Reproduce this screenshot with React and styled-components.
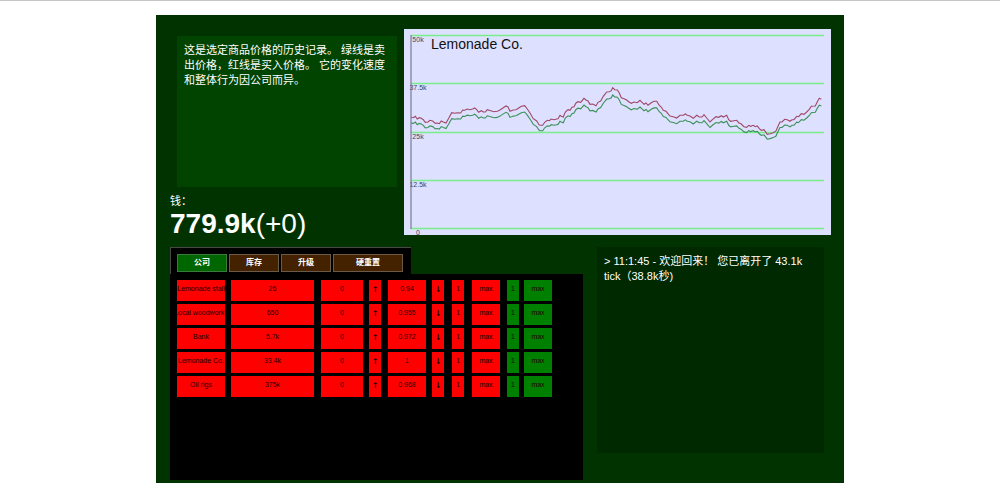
import React, { useState } from "react";
import styled, { createGlobalStyle } from "styled-components";

const GlobalStyle = createGlobalStyle`
  *, *::before, *::after { box-sizing: border-box; }
  body {
    margin: 0;
    background: #fff;
    color: #fff;
    font-family: "Liberation Sans", "Noto Sans CJK SC", sans-serif;
    font-size: 11px;
    line-height: 15px;
  }
`;

const Page = styled.div`
  border-top: 1px solid #c6c6c8;
  padding-top: 14px;
`;

const Board = styled.main`
  width: 688px;
  max-width: 100%;
  margin: 0 auto;
  padding: 14px 13px 3px 14px;
  background: #003300;
  display: flex;
  flex-direction: column;
  gap: 8px;
`;

const TopRow = styled.section`
  display: grid;
  grid-template-columns: 227px minmax(0, 1fr);
  gap: 7px;
  align-items: start;
`;

const Side = styled.div`
  display: flex;
  flex-direction: column;
  padding-top: 7px;
`;

const Info = styled.p`
  margin: 0 0 7px 7px;
  min-height: 151px;
  padding: 7px;
  background: #004400;
`;

const Money = styled.strong`
  font-size: 28px;
  line-height: 30px;
`;

const Change = styled.span`
  font-weight: 400;
`;

const Chart = styled.svg`
  display: block;
  width: 100%;
  height: auto;
  background: #dde0ff;
  font-family: "Liberation Sans", sans-serif;
`;

const BottomRow = styled.section`
  display: grid;
  grid-template-columns: 413px minmax(0, 1fr);
  gap: 14px;
  align-items: start;
`;

const TabBar = styled.nav`
  display: flex;
  gap: 2px;
  width: 241px;
  height: 27px;
  padding: 6px;
  background: #000;
  border: solid #484848;
  border-width: 1px 0 0 1px;
`;

const Tab = styled.button`
  width: ${(p) => (p.$wide ? 70 : 50)}px;
  height: 18px;
  padding: 0;
  border: 1px solid ${(p) => (p.$active ? "#3c7a3c" : "#6b5a48")};
  background: ${(p) => (p.$active ? "#006600" : "#442200")};
  color: #fff;
  font: bold 8px/16px "Liberation Sans", "Noto Sans CJK SC", sans-serif;
  text-align: center;
`;

const Panel = styled.div`
  min-height: 206px;
  padding: 6px 7px;
  background: #000;
`;

const Market = styled.table`
  table-layout: fixed;
  width: 375px;
  border-collapse: collapse;

  td {
    height: 24px;
    padding: 0;
    vertical-align: top;
  }
`;

const Box = styled.div`
  display: flex;
  justify-content: center;
  align-items: flex-start;
  width: ${(p) => p.$w}px;
  height: 21px;
  padding: 0;
  border: 0;
  overflow: hidden;
  white-space: nowrap;
  background: ${(p) => (p.$sell ? "#008000" : "#ff0000")};
  color: #200000;
  font: 7px/18px "Liberation Sans", "DejaVu Sans", sans-serif;
`;

const Arrow = styled(Box)`
  font-family: "DejaVu Sans", sans-serif;
  font-size: 8px;
  font-weight: bold;
  line-height: 20px;
`;

const Action = styled(Box).attrs({ as: "button", type: "button" })``;

const Log = styled.div`
  min-height: 206px;
  margin-right: 7px;
  padding: 7px;
  background: #002900;
`;

/* Price history: x and height in thirds of a chart unit. */
const history = [
  { x: -12, top: 624, points: [[34,292],[40,293],[46,289],[52,297],[58,293],[64,295],[70,299],[76,307],[84,306],[90,301],[98,303],[106,310],[112,309],[118,311],[124,303],[130,306],[138,309],[146,295],[155,278],[164,280],[172,278],[182,279],[188,270],[194,271],[202,267],[210,269],[218,267],[224,264],[230,269],[236,277],[244,272],[250,276],[256,276],[262,269],[272,272],[282,275],[292,274],[300,270],[310,263],[318,258],[324,261],[330,274],[340,270],[348,269],[356,264],[364,259],[374,257],[382,267],[390,279],[400,296],[410,303],[417,314]] },
  { x: 408, top: 504, points: [[0,196],[8,196],[14,187],[22,181],[28,182],[34,177],[42,179],[50,177],[54,176],[60,166],[64,169],[70,171],[76,156],[84,149],[90,151],[96,142],[102,140],[108,129],[114,125],[122,127],[132,115],[138,120],[144,123],[150,133],[158,132],[168,137],[174,127],[182,123],[190,109],[200,96],[208,95],[214,92],[218,83],[224,89],[232,90],[238,99],[244,113],[252,116],[260,120],[266,125],[274,130],[282,126],[292,128],[300,121],[306,127],[312,133],[318,129],[324,136],[334,128],[342,124],[350,124],[358,136],[364,141],[370,151],[378,154],[390,168],[400,170],[410,174],[420,166],[430,166],[436,162],[442,166]] },
  { x: 858, top: 504, points: [[0,168],[10,175],[20,166],[28,171],[36,171],[42,164],[50,174],[60,186],[68,178],[78,170],[86,172],[94,167],[100,171],[110,166],[116,179],[122,184],[132,182],[140,181],[146,188],[154,192],[162,200],[170,202],[176,196],[182,199],[190,196],[196,200],[202,198],[208,206],[214,211],[222,209],[232,223],[240,221],[250,218],[258,213],[264,199],[270,186],[276,186],[284,178],[292,179],[300,184],[306,179],[312,179],[320,169],[326,170],[334,161],[342,163],[350,156],[358,148],[364,139],[376,138],[382,125],[388,115],[394,118]] },
];

const BASE = 199;
const prices = history.flatMap((h) =>
  h.points.map(([x, y]) => [(x + h.x) / 3, (h.top - y) / 3])
);
const line = (factor) =>
  prices.map(([x, v]) => `${x.toFixed(1)},${(BASE - v * factor).toFixed(1)}`).join(" ");

const levels = [
  ["50k", 6],
  ["37.5k", 54],
  ["25k", 103],
  ["12.5k", 151],
  ["0", 199],
];

function PriceChart() {
  return (
    <Chart viewBox="0 0 427 206" role="img" aria-label="Lemonade Co.">
      {levels.map(([label, y]) => (
        <g key={label}>
          <text x="14" y={y + 7} fontSize="7" fill="#44445a" textAnchor="middle">{label}</text>
          <path d={`M7 ${y + 0.5}H420`} stroke="#78ee88" strokeWidth="1.5" />
        </g>
      ))}
      <path d="M7 6V200" stroke="#666680" />
      <polyline points={line(1)} fill="none" stroke="#a04868" strokeWidth="1.1" />
      <polyline points={line(0.948)} fill="none" stroke="#3c9058" strokeWidth="1.1" />
      <text x="27" y="20" fontSize="14" fill="#111">Lemonade Co.</text>
    </Chart>
  );
}

const columns = [54, 90, 48, 19, 44, 20, 20, 35, 17, 28];

const companies = [
  ["Lemonade stall", "26", "0.94"],
  ["Local woodworks", "650", "0.955"],
  ["Bank", "5.7k", "0.972"],
  ["Lemonade Co.", "33.4k", "1"],
  ["Oil rigs", "375k", "0.968"],
];

const tabs = ["公司", "库存", "升级", "硬重置"];

export default function App() {
  const [active, setActive] = useState("公司");
  return (
    <Page>
      <GlobalStyle />
      <Board>
        <TopRow>
          <Side>
            <Info>
              这是选定商品价格的历史记录。 绿线是卖出价格，红线是买入价格。 它的变化速度和整体行为因公司而异。
            </Info>
            <span>钱：</span>
            <Money>
              779.9k<Change>(+0)</Change>
            </Money>
          </Side>
          <PriceChart />
        </TopRow>
        <BottomRow>
          <div>
            <TabBar>
              {tabs.map((name) => (
                <Tab
                  key={name}
                  type="button"
                  $wide={name.length > 2}
                  $active={name === active}
                  onClick={() => setActive(name)}
                >
                  {name}
                </Tab>
              ))}
            </TabBar>
            <Panel>
              <Market>
                <colgroup>
                  {columns.map((w, i) => (
                    <col key={i} width={w} />
                  ))}
                </colgroup>
                <tbody>
                  {companies.map(([name, price, rate]) => (
                    <tr key={name}>
                      <td><Action $w={48}>{name}</Action></td>
                      <td><Box $w={83}>{price}</Box></td>
                      <td><Box $w={42}>0</Box></td>
                      <td><Arrow $w={12}>↑</Arrow></td>
                      <td><Box $w={38}>{rate}</Box></td>
                      <td><Arrow $w={12}>↓</Arrow></td>
                      <td><Action $w={12}>1</Action></td>
                      <td><Action $w={28}>max</Action></td>
                      <td><Action $w={12} $sell>1</Action></td>
                      <td><Action $w={28} $sell>max</Action></td>
                    </tr>
                  ))}
                </tbody>
              </Market>
            </Panel>
          </div>
          <Log>&gt; 11:1:45 - 欢迎回来！ 您已离开了 43.1k tick（38.8k秒)</Log>
        </BottomRow>
      </Board>
    </Page>
  );
}
